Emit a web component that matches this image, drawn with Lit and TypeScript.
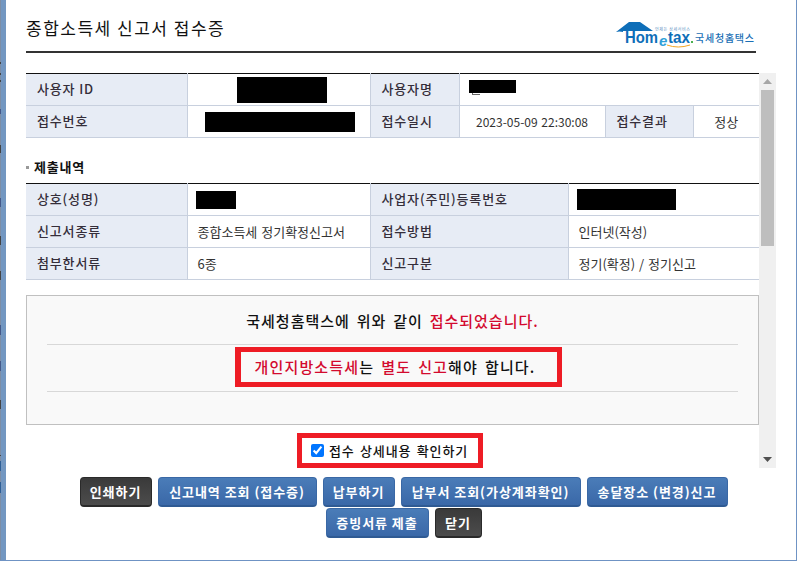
import { LitElement, html, css } from "lit";
import { customElement } from "lit/decorators.js";

const MARKS: [number, number, string][] = [
  [62, 64, "#444"], [73, 75, "#444"], [80, 82, "#444"], [109, 114, "#44598a"], [145, 153, "#444"],
  [198, 207, "#44598a"], [236, 245, "#444"], [271, 280, "#444"], [325, 335, "#44598a"],
  [361, 371, "#44598a"], [400, 409, "#444"], [455, 456, "#444"], [461, 471, "#2f5f96"], [482, 493, "#2f5f96"],
];

@customElement("app-root")
export class AppRoot extends LitElement {
  static styles = css`
    :host { display: block; width: 797px; height: 561px; overflow: hidden; background: #fff;
      font-family: "Noto Sans CJK KR", "Liberation Sans", sans-serif; color: #333; }
    .window { box-sizing: border-box; width: 797px; height: 561px; display: flex;
      border-right: 1px solid #6f93c4; border-bottom: 1px solid #6f93c4; }
    .strip { width: 6px; flex: none; background: #7397c1; }
    .marks { width: 1px; height: 100%; }
    .main { flex: 1; min-width: 0; box-sizing: border-box; padding: 0 0 0 20px; }
    .head { width: 730px; height: 53px; box-sizing: border-box; border-bottom: 2px solid #333;
      display: flex; justify-content: space-between; align-items: flex-start; }
    h1 { margin: 16px 0 0; font-size: 17px; line-height: 24px; font-weight: 400; color: #111; letter-spacing: 1.5px; white-space: nowrap; }
    .logo { display: block; margin: 21px 0 0; }
    .pane { display: flex; margin-top: 20px; height: 395px; }
    .content { width: 733px; flex: none; }
    .bar { width: 17px; flex: none; background: #f0f0f0; display: flex; flex-direction: column; align-items: center; }
    .arrow { height: 17px; flex: none; display: flex; align-items: center; justify-content: center; }
    .thumb { width: 13px; height: 156px; background: #bebebe; flex: none; }
    .grow { flex: 1; }
    table { border-collapse: collapse; table-layout: fixed; width: 733px; border-top: 1px solid #111; font-size: 13px; }
    th, td { height: 31px; padding: 0; border-bottom: 1px solid #c8d0de; border-left: 1px solid #c8d0de; box-sizing: content-box; line-height: 16px; overflow: hidden; white-space: nowrap; }
    th:first-child { border-left: 0; }
    th { height: 30px; padding: 0 0 1px 11px; background: #e7ecf5; font-weight: 500; color: #352e3a; font-size: 13px; text-align: left; letter-spacing: 0.85px; }
    td { color: #333; padding-left: 10px; background: #fff; word-spacing: 1px; }
    td.c { text-align: center; padding-left: 0; }
    td.date { font-size: 12px; }
    td.p49 { padding-left: 49px; }
    td.p17 { padding-left: 17px; }
    td.p9 { padding-left: 9px; }
    td.p8 { padding-left: 8px; }
    .redact { display: inline-block; background: #000; vertical-align: middle; position: relative; }
    .redact.up { margin-bottom: 6px; }
    .stray { position: absolute; left: 3px; top: 100%; width: 7px; height: 1px; margin-top: 0; border-left: 1px solid #666; border-bottom: 1px solid #666; }
    .sec { height: 45px; box-sizing: border-box; padding-top: 13px; font-size: 13px; font-weight: 700; line-height: 20px; color: #111; letter-spacing: 0.8px; display: flex; align-items: center; gap: 5px; }
    .sec i { display: block; width: 3px; height: 3px; background: #999; }
    .box { box-sizing: border-box; margin-top: 15px; height: 130px; border: 1px solid #c0c0c0; background: #f9f9f9; padding: 0 20px; display: flex; flex-direction: column; align-items: center; font-size: 15px; font-weight: 500; color: #111; letter-spacing: 1px; word-spacing: 2.5px; white-space: nowrap; }
    .l1 { height: 48px; line-height: 49px; width: 100%; text-align: center; border-bottom: 1px solid #d8d8d8; box-sizing: content-box; }
    .alert { box-sizing: border-box; width: 327px; height: 40px; margin: 2px 0 0 11px; padding-right: 7px; border: 5px solid #ee1c25; border-left-width: 6px; text-align: center; line-height: 29px; letter-spacing: 1.15px; }
    .l3 { width: 100%; height: 0; margin-top: 4px; border-bottom: 1px solid #d8d8d8; }
    .red { color: #d30a2e; }
    .check-wrap { display: flex; justify-content: center; margin: 8px 6px 0 0; }
    .check { box-sizing: border-box; width: 186px; height: 35px; border: 5px solid #ee1c25; display: flex; align-items: center; justify-content: center; gap: 5px; font-size: 13px; font-weight: 500; color: #111; letter-spacing: 0.9px; word-spacing: 1.5px; white-space: nowrap; }
    .check input { margin: 0; width: 13px; height: 13px; accent-color: #0075ff; flex: none; }
    .btns { width: 755px; margin-top: 9px; display: flex; flex-wrap: wrap; justify-content: center; column-gap: 6px; row-gap: 1px; }
    button { box-sizing: border-box; height: 30px; border: 1px solid #3a68a5; border-bottom: 2px solid #2f5a93; border-radius: 4px; background: linear-gradient(180deg,#4a7cb8,#3a68a8); color: #fff; font: 700 13px "Noto Sans CJK KR", sans-serif; padding: 0; letter-spacing: 0.95px; white-space: nowrap; }
    button.dark { background: linear-gradient(180deg,#3a3a3a,#4c4c4c); border-color: #2a2a2a; }
  `;

  render() {
    const b = (t: string, w: number, dark = false) =>
      html`<button class=${dark ? "dark" : ""} style="width:${w}px">${t}</button>`;
    const r = (w: number, h: number) =>
      html`<span class="redact" style="width:${w}px;height:${h}px"></span>`;
    const stops = MARKS.map(([a, z, c]) => `transparent ${a}px,${c} ${a}px,${c} ${z}px,transparent ${z}px`).join(",");
    return html`
      <div class="window">
        <div class="strip"><div class="marks" style="background:linear-gradient(180deg,${stops}),#7d8ea6"></div></div>
        <div class="main">
          <div class="head">
            <h1>종합소득세 신고서 접수증</h1>
            <svg class="logo" width="141" height="30" viewBox="0 0 141 30">
              <path d="M1 11 L14 1 H25 L38 10 H5 V17 H8 V10 Z M5 11 H8 V17 H5 Z" fill="#0e6eb8"/>
              <text x="10" y="22" font-family="Liberation Sans" font-weight="700" font-size="16" fill="#0e6eb8" textLength="33" lengthAdjust="spacingAndGlyphs">Hom</text>
              <text x="44" y="25" font-family="Liberation Sans" font-style="italic" font-weight="700" font-size="15" fill="#2f9fd8">e</text>
              <text x="53" y="22" font-family="Liberation Sans" font-weight="700" font-size="16" fill="#0e6eb8" textLength="22" lengthAdjust="spacingAndGlyphs">tax</text>
              <rect x="76" y="20" width="2" height="2" fill="#4caf50"/>
              <path d="M52 24 Q63 28 75 24" stroke="#f5a623" stroke-width="1" fill="none"/>
              <text x="80" y="21" font-family="Noto Sans CJK KR" font-weight="500" font-size="10" fill="#1a6fb5" textLength="59">국세청홈택스</text>
              <text x="40" y="10" font-family="Noto Sans CJK KR" font-size="4" fill="#5b8fc2" textLength="35">언제든 상세서비스</text>
            </svg>
          </div>
          <div class="pane">
            <div class="content">
              <table>
                <colgroup><col style="width:161px"><col style="width:183px"><col style="width:89px"><col style="width:146px"><col style="width:88px"><col style="width:66px"></colgroup>
                <tr><th>사용자 ID</th><td class="p49">${r(90, 26)}</td><th>사용자명</th><td colspan="3" class="p9"><span class="redact up" style="width:47px;height:13px"><span class="stray"></span></span></td></tr>
                <tr><th>접수번호</th><td class="p17">${r(150, 20)}</td><th>접수일시</th><td class="c date">2023-05-09 22:30:08</td><th>접수결과</th><td class="c">정상</td></tr>
              </table>
              <div class="sec"><i></i>제출내역</div>
              <table>
                <colgroup><col style="width:161px"><col style="width:183px"><col style="width:198px"><col style="width:191px"></colgroup>
                <tr><th>상호(성명)</th><td class="p8">${r(40, 18)}</td><th>사업자(주민)등록번호</th><td class="p8">${r(99, 21)}</td></tr>
                <tr><th>신고서종류</th><td>종합소득세 정기확정신고서</td><th>접수방법</th><td>인터넷(작성)</td></tr>
                <tr><th>첨부한서류</th><td>6종</td><th>신고구분</th><td>정기(확정) / 정기신고</td></tr>
              </table>
              <div class="box">
                <div class="l1">국세청홈택스에 위와 같이 <span class="red">접수되었습니다.</span></div>
                <div class="alert"><span class="red">개인지방소득세</span>는 <span class="red">별도 신고</span>해야 합니다.</div>
                <div class="l3"></div>
              </div>
              <div class="check-wrap">
                <label class="check"><input type="checkbox" checked />접수 상세내용 확인하기</label>
              </div>
            </div>
            <div class="bar">
              <div class="arrow"><svg width="9" height="5"><path d="M0 5 L4.5 0 L9 5Z" fill="#a6a6a6"/></svg></div>
              <div class="thumb"></div>
              <div class="grow"></div>
              <div class="arrow"><svg width="9" height="5"><path d="M0 0 L4.5 5 L9 0Z" fill="#505050"/></svg></div>
            </div>
          </div>
          <div class="btns">
            ${b("인쇄하기", 72, true)}${b("신고내역 조회 (접수증)", 159)}${b("납부하기", 72)}${b("납부서 조회(가상계좌확인)", 180)}${b("송달장소 (변경)신고", 141)}
            ${b("증빙서류 제출", 103)}${b("닫기", 47, true)}
          </div>
        </div>
      </div>
    `;
  }
}
